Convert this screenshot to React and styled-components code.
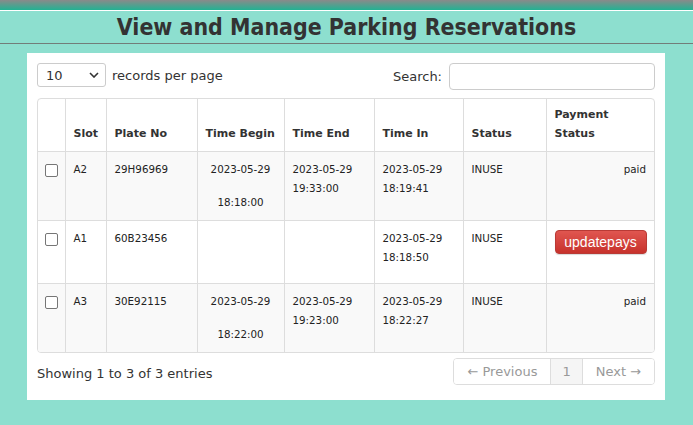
import styled, { createGlobalStyle } from 'styled-components';

const GlobalStyle = createGlobalStyle`
  body {
    margin: 0;
    background: #8ddfcf;
    font-family: "DejaVu Sans", Verdana, sans-serif;
    color: #333;
  }
`;

const TopBar = styled.div`
  height: 10px;
  background: linear-gradient(#8a8a8a, #22b293);
  border-bottom: 1px solid #fff;
`;

const Header = styled.header`
  height: 32px;
  border-bottom: 1px solid #727d79;
  display: flex;
  align-items: center;
  justify-content: center;
`;

const Title = styled.h1`
  margin: 0;
  font-family: "DejaVu Sans Condensed", "DejaVu Sans", sans-serif;
  font-weight: bold;
  font-size: 22.9px;
  color: #333;
`;

const Main = styled.main`
  padding: 9px 28px 25px 27px;
`;

const Card = styled.section`
  background: #fff;
  padding: 10px;
  height: 327px;
`;

const Controls = styled.div`
  display: flex;
  justify-content: space-between;
  align-items: flex-start;
  height: 27px;
`;

const Length = styled.label`
  display: flex;
  align-items: center;
  gap: 6px;
  font-size: 13px;
  height: 24px;
`;

const Select = styled.div`
  width: 69px;
  height: 24px;
  box-sizing: border-box;
  border: 1px solid #ccc;
  border-radius: 3px;
  display: flex;
  align-items: center;
  justify-content: space-between;
  padding: 0 6px 0 8px;
  font-size: 13px;
`;

const SearchLabel = styled.label`
  display: flex;
  align-items: center;
  gap: 7px;
  font-size: 13px;
`;

const SearchInput = styled.input`
  width: 206px;
  height: 27px;
  box-sizing: border-box;
  border: 1px solid #ccc;
  border-radius: 4px;
  outline: none;
`;

const TableWrap = styled.div`
  margin-top: 8px;
  border: 1px solid #ddd;
  border-radius: 4px;
  overflow: hidden;
`;

const Table = styled.table`
  width: 100%;
  border-collapse: collapse;
  table-layout: fixed;
`;

const Th = styled.th`
  text-align: left;
  vertical-align: bottom;
  font-size: 11px;
  line-height: 19px;
  padding: 6px 8px 8px;
  color: #333;
  border-left: 1px solid #ddd;
  &:first-child { border-left: none; }
`;

const Row = styled.tr`
  background: ${p => (p.$odd ? '#f9f9f9' : '#fff')};
  border-top: 1px solid #ddd;
`;

const Td = styled.td`
  vertical-align: top;
  font-size: 10.3px;
  line-height: 19px;
  padding: 8px 8px 8px;
  color: #222;
  text-align: ${p => p.$align || 'left'};
  border-left: 1px solid #ddd;
  &:first-child { border-left: none; padding: 8px 7px 8px; }
`;

const Check = styled.span`
  display: block;
  width: 11px;
  height: 11px;
  margin-top: 4px;
  border: 1px solid #767676;
  border-radius: 2px;
  background: #fff;
`;

const Later = styled.div`
  margin-top: 14px;
`;

const PayButton = styled.button`
  display: block;
  margin: 1px 0 21px auto;
  width: 92px;
  height: 24px;
  padding: 0;
  border: 1px solid #b93a35;
  border-radius: 4px;
  background: linear-gradient(#e05650, #c7322c);
  color: #fff;
  font-family: "Liberation Sans", Arial, sans-serif;
  font-size: 14px;
  box-shadow: 0 1px 1px rgba(0, 0, 0, 0.15);
`;

const Footer = styled.div`
  margin-top: 5px;
  display: flex;
  justify-content: space-between;
  align-items: center;
`;

const Info = styled.div`
  font-size: 13px;
  padding-top: 3px;
`;

const Pager = styled.ul`
  display: flex;
  margin: 0;
  padding: 0;
  list-style: none;
  border: 1px solid #ddd;
  border-radius: 4px;
  overflow: hidden;
  height: 25px;
`;

const PageItem = styled.li`
  padding: 0 ${p => p.$pad || 13}px;
  display: flex;
  align-items: center;
  font-size: 13px;
  color: #999;
  background: ${p => (p.$active ? '#f5f5f5' : '#fff')};
  border-left: 1px solid #ddd;
  &:first-child { border-left: none; }
`;

const Chevron = () => (
  <svg width="10" height="6" viewBox="0 0 10 6">
    <path d="M1 1l4 4 4-4" fill="none" stroke="#333" strokeWidth="1.6" />
  </svg>
);

const rows = [
  { slot: 'A2', plate: '29H96969', begin: ['2023-05-29', '18:18:00'], end: ['2023-05-29', '19:33:00'], tin: ['2023-05-29', '18:19:41'], pay: 'paid' },
  { slot: 'A1', plate: '60B23456', begin: null, end: null, tin: ['2023-05-29', '18:18:50'], pay: null },
  { slot: 'A3', plate: '30E92115', begin: ['2023-05-29', '18:22:00'], end: ['2023-05-29', '19:23:00'], tin: ['2023-05-29', '18:22:27'], pay: 'paid' },
];

const widths = [27, 41, 91, 87, 90, 89, 83, 108];

export default function App() {
  return (
    <>
      <GlobalStyle />
      <TopBar />
      <Header>
        <Title>View and Manage Parking Reservations</Title>
      </Header>
      <Main>
        <Card>
          <Controls>
            <Length>
              <Select>
                <span>10</span>
                <Chevron />
              </Select>
              records per page
            </Length>
            <SearchLabel>
              Search:
              <SearchInput />
            </SearchLabel>
          </Controls>
          <TableWrap>
            <Table>
              <colgroup>
                {widths.map((w, i) => <col key={i} style={{ width: w }} />)}
              </colgroup>
              <thead>
                <tr>
                  <Th />
                  <Th>Slot</Th>
                  <Th>Plate No</Th>
                  <Th>Time Begin</Th>
                  <Th>Time End</Th>
                  <Th>Time In</Th>
                  <Th>Status</Th>
                  <Th>Payment Status</Th>
                </tr>
              </thead>
              <tbody>
                {rows.map((r, i) => (
                  <Row key={r.slot} $odd={i % 2 === 0}>
                    <Td><Check /></Td>
                    <Td>{r.slot}</Td>
                    <Td>{r.plate}</Td>
                    <Td $align="center">
                      {r.begin && (
                        <>
                          <div>{r.begin[0]}</div>
                          <Later>{r.begin[1]}</Later>
                        </>
                      )}
                    </Td>
                    <Td>{r.end && <>{r.end[0]}<br />{r.end[1]}</>}</Td>
                    <Td>{r.tin[0]}<br />{r.tin[1]}</Td>
                    <Td>INUSE</Td>
                    <Td $align="right">
                      {r.pay ? r.pay : <PayButton>updatepays</PayButton>}
                    </Td>
                  </Row>
                ))}
              </tbody>
            </Table>
          </TableWrap>
          <Footer>
            <Info>Showing 1 to 3 of 3 entries</Info>
            <Pager>
              <PageItem>← Previous</PageItem>
              <PageItem $active $pad={11}>1</PageItem>
              <PageItem>Next →</PageItem>
            </Pager>
          </Footer>
        </Card>
      </Main>
    </>
  );
}
